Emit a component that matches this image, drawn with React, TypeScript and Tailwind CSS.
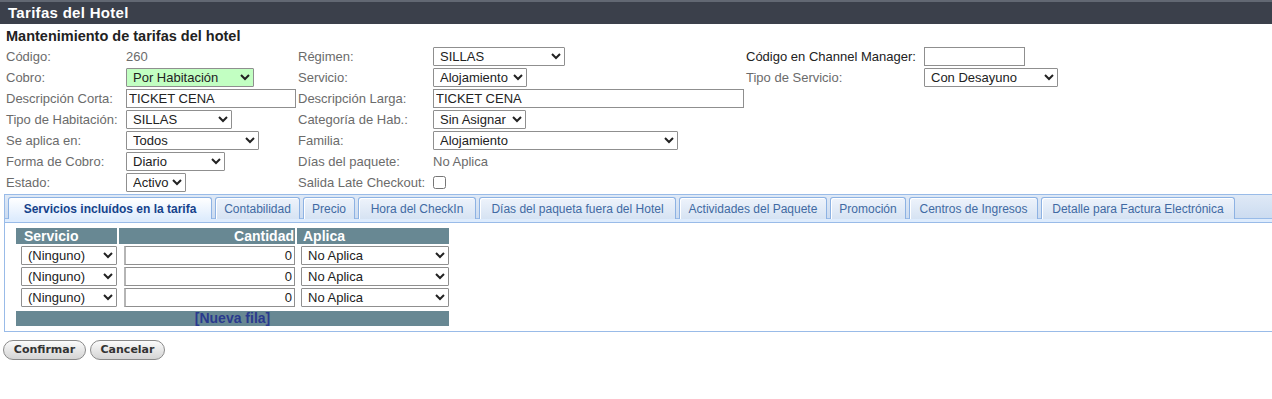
const sel = "h-[19px] border border-[#8f8f8f] text-[13px] text-[#222] pl-[2px] rounded-[1px]";
const inp = "h-[19px] border border-[#8f8f8f] bg-white text-[13px] text-[#222] px-[2px]";

function Label({ children, dark }: { children: React.ReactNode; dark?: boolean }) {
  return <div className={dark ? "text-[#222]" : "text-[#6b6b6b]"}>{children}</div>;
}

const tabs = [
  { label: "Servicios incluídos en la tarifa", w: "w-[204px]", active: true },
  { label: "Contabilidad", w: "w-[85px]" },
  { label: "Precio", w: "w-[52px]" },
  { label: "Hora del CheckIn", w: "w-[118px]" },
  { label: "Días del paqueta fuera del Hotel", w: "w-[197px]" },
  { label: "Actividades del Paquete", w: "w-[148px]" },
  { label: "Promoción", w: "w-[76px]" },
  { label: "Centros de Ingresos", w: "w-[129px]" },
  { label: "Detalle para Factura Electrónica", w: "w-[194px]" },
];

export default function App() {
  return (
    <div className="w-[1272px] h-[399px] bg-white font-['Liberation_Sans',Arial,sans-serif] text-[13px] overflow-hidden">
      <div className="h-[24px] bg-[#3b404b] border-t-2 border-[#626873] pl-[8px] flex items-center">
        <span className="text-white font-bold text-[15px] tracking-[0.3px]">Tarifas del Hotel</span>
      </div>
      <div className="h-[22px] pl-[6px] pt-[3px] font-bold text-[14.5px] text-[#222] leading-[19px]">Mantenimiento de tarifas del hotel</div>

      <div className="grid grid-cols-[120px_172px_135px_313px_178px_1fr] auto-rows-[21px] items-center pl-[6px]">
        <Label>Código:</Label>
        <div className="text-[#6b6b6b]">260</div>
        <Label>Régimen:</Label>
        <div><select className={`${sel} bg-white w-[132px]`}><option>SILLAS</option></select></div>
        <Label dark>Código en Channel Manager:</Label>
        <div><input className={`${inp} w-[101px] h-[18px]`} /></div>

        <Label>Cobro:</Label>
        <div><select className={`${sel} w-[128px] bg-[#c2ffc2]`}><option>Por Habitación</option></select></div>
        <Label>Servicio:</Label>
        <div><select className={`${sel} bg-white w-[94px]`}><option>Alojamiento</option></select></div>
        <Label>Tipo de Servicio:</Label>
        <div><select className={`${sel} bg-white w-[134px]`}><option>Con Desayuno</option></select></div>

        <Label>Descripción Corta:</Label>
        <div><input className={`${inp} w-[170px]`} defaultValue="TICKET CENA" /></div>
        <Label>Descripción Larga:</Label>
        <div><input className={`${inp} w-[311px]`} defaultValue="TICKET CENA" /></div>
        <div />
        <div />

        <Label>Tipo de Habitación:</Label>
        <div><select className={`${sel} bg-white w-[106px]`}><option>SILLAS</option></select></div>
        <Label>Categoría de Hab.:</Label>
        <div><select className={`${sel} bg-white w-[93px]`}><option>Sin Asignar</option></select></div>
        <div />
        <div />

        <Label>Se aplica en:</Label>
        <div><select className={`${sel} bg-white w-[133px]`}><option>Todos</option></select></div>
        <Label>Familia:</Label>
        <div><select className={`${sel} bg-white w-[245px]`}><option>Alojamiento</option></select></div>
        <div />
        <div />

        <Label>Forma de Cobro:</Label>
        <div><select className={`${sel} bg-white w-[99px]`}><option>Diario</option></select></div>
        <Label>Días del paquete:</Label>
        <div className="text-[#6b6b6b]">No Aplica</div>
        <div />
        <div />

        <Label>Estado:</Label>
        <div><select className={`${sel} bg-white w-[60px]`}><option>Activo</option></select></div>
        <Label>Salida Late Checkout:</Label>
        <div className="flex items-center"><input type="checkbox" className="w-[13px] h-[13px] m-0" /></div>
        <div />
        <div />
      </div>

      <div className="ml-[4px] mt-[1px] border border-r-0 border-[#99bbe8]">
        <div className="h-[24px] bg-gradient-to-b from-[#dfe9f6] to-[#cbdbf0] flex items-end gap-[3px] pl-[3px]">
          {tabs.map((t) =>
            t.active ? (
              <div
                key={t.label}
                className={`${t.w} h-[22px] border border-b-0 border-[#8db2e3] rounded-t-[3px] bg-gradient-to-b from-[#ffffff] to-[#deecfd] flex items-center justify-center text-[12px] font-bold text-[#15428b]`}
              >
                {t.label}
              </div>
            ) : (
              <div
                key={t.label}
                className={`${t.w} h-[22px] border border-b-0 border-[#8db2e3] rounded-t-[3px] bg-gradient-to-b from-[#eef3fb] to-[#d6e3f3] shadow-[inset_1px_1px_0_#ffffff] flex items-center justify-center text-[12px] text-[#416aa3]`}
              >
                {t.label}
              </div>
            )
          )}
        </div>
        <div className="h-[4px] bg-[#deecfd] border-t border-[#99bbe8] -mt-px" />
        <div className="h-[109px] border-t border-[#99bbe8] pl-[11px] pt-[5px]">
          <div className="grid grid-cols-[101px_176px_152px] gap-[2px] w-[433px]">
            <div className="h-[16px] bg-[#688893] text-white font-bold text-[14px] leading-[16px] pl-[8px]">Servicio</div>
            <div className="h-[16px] bg-[#688893] text-white font-bold text-[14px] leading-[16px] text-right pr-[1px]">Cantidad</div>
            <div className="h-[16px] bg-[#688893] text-white font-bold text-[14px] leading-[16px] pl-[6px]">Aplica</div>
            {[0, 1, 2].map((i) => (
              <div key={i} className="contents">
                <div className="h-[19px] pl-[5px]">
                  <select className={`${sel} bg-white w-[96px]`}><option>(Ninguno)</option></select>
                </div>
                <div className="h-[19px] pl-[5px]">
                  <input className={`${inp} w-full text-right border-l-2 border-l-[#b5b5b5]`} defaultValue="0" />
                </div>
                <div className="h-[19px] pl-[4px]">
                  <select className={`${sel} bg-white w-full`}><option>No Aplica</option></select>
                </div>
              </div>
            ))}
            <div className="col-span-3 mt-[2px] h-[15px] bg-[#688893] text-center font-bold text-[14px] leading-[15px] text-[#2a3a8e]">[Nueva fila]</div>
          </div>
        </div>
      </div>

      <div className="flex gap-[4px] pl-[3px] mt-[8px] font-['DejaVu_Sans',Verdana,sans-serif]">
        <button className="h-[20px] w-[83px] rounded-full border border-[#8a8a8a] bg-gradient-to-b from-[#fbfbfb] to-[#d4d4d4] text-[11px] font-bold text-[#333]">Confirmar</button>
        <button className="h-[20px] w-[75px] rounded-full border border-[#8a8a8a] bg-gradient-to-b from-[#fbfbfb] to-[#d4d4d4] text-[11px] font-bold text-[#333]">Cancelar</button>
      </div>
    </div>
  );
}
